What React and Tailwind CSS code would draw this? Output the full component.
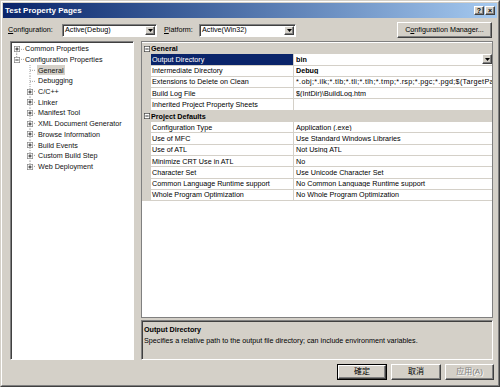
import React from "react";

const RAISED =
  "border border-t-white border-l-white border-r-[#404040] border-b-[#404040] shadow-[inset_-1px_-1px_0_#808080] bg-[#d4d0c8]";
const SUNKEN =
  "border border-t-[#808080] border-l-[#808080] border-r-white border-b-white shadow-[inset_1px_1px_0_#404040]";

function Arrow() {
  return (
    <svg width="5" height="3" viewBox="0 0 5 3">
      <polygon points="0,0 5,0 2.5,3" fill="black" />
    </svg>
  );
}

function DropBtn({ h }) {
  return (
    <div className={`w-[10px] ${h} ${RAISED} flex items-center justify-center shrink-0`}>
      <Arrow />
    </div>
  );
}

function Combo({ w, text }) {
  return (
    <div className={`${w} h-[13px] bg-white ${SUNKEN} flex items-center pl-[2px] pr-[1px]`}>
      <span className="flex-1 text-[7.2px] leading-none">{text}</span>
      <DropBtn h="h-[9px]" />
    </div>
  );
}

function Box({ open, stroke = "#808080" }) {
  return (
    <svg width="6" height="6" viewBox="0 0 9 9" className="shrink-0 block">
      <rect x="0.5" y="0.5" width="8" height="8" fill="white" stroke={stroke} />
      <line x1="2" y1="4.5" x2="7" y2="4.5" stroke="black" strokeWidth="1.2" />
      {!open && <line x1="4.5" y1="2" x2="4.5" y2="7" stroke="black" strokeWidth="1.2" />}
    </svg>
  );
}

const ROW_H = "h-[10.7px]";

function RootRow({ label, open, first }) {
  return (
    <div className={`${ROW_H} flex items-center`}>
      <div className="relative w-[12px] h-full shrink-0">
        <svg width="12" height="10.7" viewBox="0 0 12 10.7" className="absolute inset-0">
          <line
            x1="4.7"
            y1={first ? 5.35 : 0}
            x2="4.7"
            y2={first ? 10.7 : 5.35}
            stroke="#a0a0a0"
            strokeDasharray="1 1"
          />
          <line x1="7" y1="5.35" x2="12" y2="5.35" stroke="#a0a0a0" strokeDasharray="1 1" />
        </svg>
        <div className="absolute left-[1.7px] top-[2.35px]">
          <Box open={open} />
        </div>
      </div>
      <span className="ml-[1px] text-[7.2px] leading-none whitespace-nowrap text-[#101010]">{label}</span>
    </div>
  );
}

function ChildRow({ label, expander, last, selected }) {
  return (
    <div className={`${ROW_H} flex items-center`}>
      <div className="w-[12px] shrink-0" />
      <div className="relative w-[12px] h-full shrink-0">
        <svg width="12" height="10.7" viewBox="0 0 12 10.7" className="absolute inset-0">
          <line x1="6" y1="0" x2="6" y2={last ? 5.35 : 10.7} stroke="#a0a0a0" strokeDasharray="1 1" />
          <line x1="6" y1="5.35" x2="12" y2="5.35" stroke="#a0a0a0" strokeDasharray="1 1" />
        </svg>
        {expander && (
          <div className="absolute left-[3px] top-[2.35px]">
            <Box open={false} />
          </div>
        )}
      </div>
      <span
        className={`ml-[1px] px-[1px] h-[10px] flex items-center text-[7.2px] leading-none whitespace-nowrap text-[#101010] ${
          selected ? "bg-[#d4d0c8]" : ""
        }`}
      >
        {label}
      </span>
    </div>
  );
}

const GRID_H = "h-[11.3px]";

function CatRow({ title }) {
  return (
    <div className={`${GRID_H} bg-[#d4d0c8] flex items-center`}>
      <div className="w-[9px] flex justify-center shrink-0">
        <Box open stroke="#404040" />
      </div>
      <span className="text-[7.2px] font-bold leading-none">{title}</span>
    </div>
  );
}

function PropRow({ name, value, bold, selected, dropdown, wide }) {
  return (
    <div className={`${GRID_H} flex`}>
      <div className="w-[9px] bg-[#d4d0c8] shrink-0" />
      <div
        className={`w-[143px] shrink-0 border-b border-r border-[#d4d0c8] flex items-center pl-[1px] ${
          selected ? "bg-[#0a246a] text-white" : ""
        }`}
      >
        <span className="text-[7.2px] leading-none whitespace-nowrap">{name}</span>
      </div>
      <div className="flex-1 min-w-0 border-b border-[#d4d0c8] flex items-center pl-[2px] overflow-hidden">
        <span
          className={`flex-1 text-[7.2px] leading-none whitespace-nowrap overflow-hidden ${bold ? "font-bold" : ""} ${
            wide ? "tracking-[0.3px]" : ""
          }`}
        >
          {value}
        </span>
        {dropdown && <DropBtn h="h-[10px]" />}
      </div>
    </div>
  );
}

const general = [
  { name: "Output Directory", value: "bin", bold: true, selected: true, dropdown: true },
  { name: "Intermediate Directory", value: "Debug", bold: true },
  {
    name: "Extensions to Delete on Clean",
    value: "*.obj;*.ilk;*.tlb;*.tli;*.tlh;*.tmp;*.rsp;*.pgc;*.pgd;$(TargetPath)",
    wide: true,
  },
  { name: "Build Log File", value: "$(IntDir)\\BuildLog.htm" },
  { name: "Inherited Project Property Sheets", value: "" },
];

const defaults = [
  { name: "Configuration Type", value: "Application (.exe)" },
  { name: "Use of MFC", value: "Use Standard Windows Libraries" },
  { name: "Use of ATL", value: "Not Using ATL" },
  { name: "Minimize CRT Use in ATL", value: "No" },
  { name: "Character Set", value: "Use Unicode Character Set" },
  { name: "Common Language Runtime support", value: "No Common Language Runtime support" },
  { name: "Whole Program Optimization", value: "No Whole Program Optimization" },
];

const children = [
  { label: "General", selected: true },
  { label: "Debugging" },
  { label: "C/C++", expander: true },
  { label: "Linker", expander: true },
  { label: "Manifest Tool", expander: true },
  { label: "XML Document Generator", expander: true },
  { label: "Browse Information", expander: true },
  { label: "Build Events", expander: true },
  { label: "Custom Build Step", expander: true },
  { label: "Web Deployment", expander: true },
];

function DlgButton({ w, children, isDefault, disabled }) {
  const inner = (
    <div
      className={`h-full w-full ${RAISED} flex items-center justify-center text-[8px] leading-none font-['Liberation_Sans','Noto_Sans_CJK_SC',sans-serif] ${
        disabled ? "text-[#808080] [text-shadow:1px_1px_0_#ffffff]" : ""
      }`}
    >
      {children}
    </div>
  );
  if (isDefault) {
    return <div className={`${w} h-[16px] border border-black`}>{inner}</div>;
  }
  return <div className={`${w} h-[16px]`}>{inner}</div>;
}

export default function App() {
  return (
    <div className="w-[500px] h-[387px] bg-[#d4d0c8] border border-t-[#d4d0c8] border-l-[#d4d0c8] border-r-[#404040] border-b-[#404040] font-['Liberation_Sans',Arial,sans-serif] text-black overflow-hidden">
      <div className="h-full border border-t-white border-l-white border-r-[#808080] border-b-[#808080] flex flex-col">
        {/* title bar */}
        <div className="h-[15px] mx-[1px] mt-[1px] flex items-center bg-linear-to-r from-[#0a246a] to-[#a6caf0] pl-[2px] pr-[2px]">
          <span className="text-white font-bold text-[8px] leading-none">Test Property Pages</span>
          <div className="ml-auto flex gap-[1px]">
            <div className={`w-[10px] h-[9px] ${RAISED} flex items-center justify-center text-[7px] font-bold leading-none`}>?</div>
            <div className={`w-[10px] h-[9px] ${RAISED} flex items-center justify-center text-[7px] font-bold leading-none`}>×</div>
          </div>
        </div>

        {/* configuration row */}
        <div className="h-[18px] mt-[3px] flex items-center">
          <div className="w-[60px] pl-[6px] text-[7.2px] leading-none whitespace-nowrap">
            <span className="underline">C</span>onfiguration:
          </div>
          <Combo w="w-[95px]" text="Active(Debug)" />
          <div className="w-[35px] ml-[7px] text-[7.2px] leading-none whitespace-nowrap">
            <span className="underline">P</span>latform:
          </div>
          <Combo w="w-[97px]" text="Active(Win32)" />
          <div className={`ml-auto mr-[6px] w-[95px] h-[16px] ${RAISED} flex items-center justify-center text-[7.2px] leading-none`}>
            C<span className="underline">o</span>nfiguration Manager...
          </div>
        </div>

        {/* main area */}
        <div className="mt-[2px] h-[319px] flex">
          {/* tree */}
          <div className={`ml-[8px] w-[124px] h-full bg-white ${SUNKEN} pt-[1.6px] pl-[1px]`}>
            <RootRow label="Common Properties" open={false} first />
            <RootRow label="Configuration Properties" open />
            {children.map((c, i) => (
              <ChildRow key={c.label} {...c} last={i === children.length - 1} />
            ))}
          </div>

          {/* right column */}
          <div className="ml-[7px] w-[352px] h-full flex flex-col">
            <div className="h-[277px] bg-white border border-[#808080] pt-[1px] overflow-hidden">
              <CatRow title="General" />
              {general.map((r) => (
                <PropRow key={r.name} {...r} />
              ))}
              <CatRow title="Project Defaults" />
              {defaults.map((r) => (
                <PropRow key={r.name} {...r} />
              ))}
            </div>
            <div className="mt-[2px] h-[40px] border border-t-[#808080] border-l-[#808080] border-r-white border-b-white shadow-[inset_1px_1px_0_#404040] px-[2px] pt-[3px]">
              <div className="text-[7.2px] font-bold leading-[11px]">Output Directory</div>
              <div className="text-[7.2px] leading-[11px] whitespace-nowrap">
                Specifies a relative path to the output file directory; can include environment variables.
              </div>
            </div>
          </div>
        </div>

        {/* buttons */}
        <div className="mt-[4px] flex justify-end gap-[4px] mr-[4px]">
          <DlgButton w="w-[50px]" isDefault>
            確定
          </DlgButton>
          <DlgButton w="w-[50px]">取消</DlgButton>
          <DlgButton w="w-[49px]" disabled>
            应用(A)
          </DlgButton>
        </div>
      </div>
    </div>
  );
}
